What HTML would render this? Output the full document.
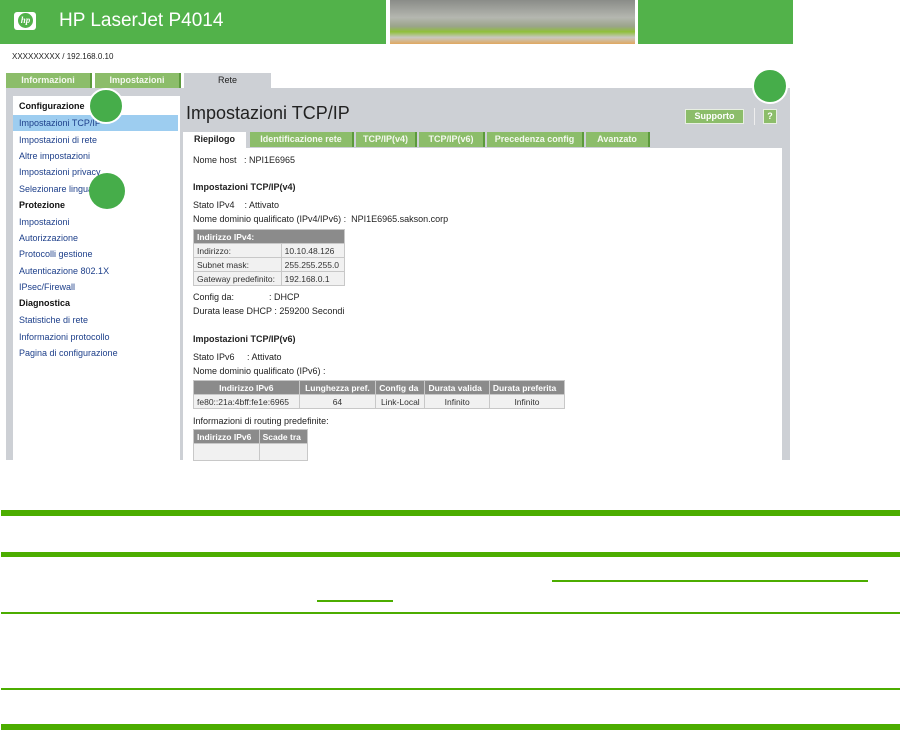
<!DOCTYPE html>
<html><head><meta charset="utf-8"><style>
*{margin:0;padding:0;box-sizing:border-box}
body{width:901px;height:732px;background:#fff;font-family:"Liberation Sans",Arial,sans-serif;position:relative;overflow:hidden;color:#222}
.a{position:absolute}
.t{font-size:9px;white-space:nowrap}
.nav{position:absolute;left:19px;font-size:9px;color:#1d3f8a;white-space:nowrap}
.nb{color:#111;font-weight:bold}
.tab{position:absolute;height:15px;background:#8cbd6a;color:#f4f8ef;font-weight:bold;font-size:9px;text-align:center;line-height:15px;border-right:2px solid #5c9a3c}
.circ{position:absolute;width:36px;height:36px;border-radius:50%;background:#46ad4a;border:2px solid #fff}
table{border-collapse:collapse;font-size:9px;position:absolute}
td,th{height:14px;padding:0 3px;white-space:nowrap;border:1px solid #c8c8c8}
th{background:#8b8b8b;color:#fff;text-align:left}
td{background:#f1f1f1;color:#333}
</style></head><body>
<div class="a" style="left:0;top:0;width:386px;height:44px;background:#52b24a"></div>
<div class="a" style="left:14px;top:12px;width:22px;height:18px;background:#fff;border-radius:3px"></div>
<div class="a" style="left:18px;top:13px;width:15px;height:15px;border-radius:50%;background:#52b24a;color:#fff;font:italic bold 9px 'Liberation Serif',serif;text-align:center;line-height:15px">hp</div>
<div class="a" style="left:59px;top:10px;color:#fff;font-size:19px">HP LaserJet P4014</div>
<div class="a" style="left:390px;top:0;width:245px;height:44px;background:linear-gradient(180deg,#8a8c88 0%,#b5b7b0 40%,#9aa48a 60%,#8fbf3a 72%,#c8c8c0 85%,#e0a860 100%)"></div>
<div class="a" style="left:638px;top:0;width:155px;height:44px;background:#52b24a"></div>
<div class="a t" style="left:12px;top:52px;font-size:8px;color:#222">XXXXXXXXX / 192.168.0.10</div>

<div class="a" style="left:6px;top:88px;width:784px;height:372px;background:#cdd0d5"></div>
<div class="tab" style="left:6px;top:73px;width:86px">Informazioni</div>
<div class="tab" style="left:95px;top:73px;width:86px">Impostazioni</div>
<div class="a" style="left:184px;top:73px;width:87px;height:15px;background:#cdd0d5;font-size:9px;text-align:center;line-height:15px;color:#222">Rete</div>

<div class="a" style="left:13px;top:96px;width:167px;height:364px;background:#fff"></div>
<div class="a" style="left:13px;top:115px;width:165px;height:16px;background:#9dcdf0"></div>
<div class="nav nb" style="top:101px">Configurazione</div>
<div class="nav" style="top:118px">Impostazioni TCP/IP</div>
<div class="nav" style="top:135px">Impostazioni di rete</div>
<div class="nav" style="top:151px">Altre impostazioni</div>
<div class="nav" style="top:167px">Impostazioni privacy</div>
<div class="nav" style="top:184px">Selezionare lingua</div>
<div class="nav nb" style="top:200px">Protezione</div>
<div class="nav" style="top:217px">Impostazioni</div>
<div class="nav" style="top:233px">Autorizzazione</div>
<div class="nav" style="top:249px">Protocolli gestione</div>
<div class="nav" style="top:266px">Autenticazione 802.1X</div>
<div class="nav" style="top:282px">IPsec/Firewall</div>
<div class="nav nb" style="top:298px">Diagnostica</div>
<div class="nav" style="top:315px">Statistiche di rete</div>
<div class="nav" style="top:332px">Informazioni protocollo</div>
<div class="nav" style="top:348px">Pagina di configurazione</div>

<div class="a" style="left:186px;top:103px;font-size:18px;color:#222">Impostazioni TCP/IP</div>
<div class="a" style="left:685px;top:109px;width:59px;height:15px;background:#8cbd6a;border:1px solid #e8efe2;color:#fff;font-weight:bold;font-size:9px;text-align:center;line-height:13px">Supporto</div>
<div class="a" style="left:754px;top:108px;width:1px;height:17px;background:#eee"></div>
<div class="a" style="left:763px;top:109px;width:14px;height:15px;background:#8cbd6a;border:1px solid #e8efe2;color:#fff;font-weight:bold;font-size:9px;text-align:center;line-height:13px">?</div>

<div class="a" style="left:183px;top:132px;width:63px;height:16px;background:#fff;font-size:9px;font-weight:bold;text-align:center;line-height:15px">Riepilogo</div>
<div class="tab" style="left:250px;top:132px;width:104px">Identificazione rete</div>
<div class="tab" style="left:356px;top:132px;width:61px">TCP/IP(v4)</div>
<div class="tab" style="left:419px;top:132px;width:66px">TCP/IP(v6)</div>
<div class="tab" style="left:487px;top:132px;width:97px">Precedenza config</div>
<div class="tab" style="left:586px;top:132px;width:64px">Avanzato</div>

<div class="a" style="left:183px;top:148px;width:599px;height:312px;background:#fff"></div>
<div class="a t" style="left:193px;top:155px">Nome host &nbsp;&nbsp;: NPI1E6965</div>
<div class="a t" style="left:193px;top:182px;font-weight:bold">Impostazioni TCP/IP(v4)</div>
<div class="a t" style="left:193px;top:200px">Stato IPv4 &nbsp;&nbsp;&nbsp;: Attivato</div>
<div class="a t" style="left:193px;top:214px">Nome dominio qualificato (IPv4/IPv6) : &nbsp;NPI1E6965.sakson.corp</div>
<table style="left:193px;top:229px;width:152px;font-size:8.5px">
<tr><th colspan="2">Indirizzo IPv4:</th></tr>
<tr><td>Indirizzo:</td><td>10.10.48.126</td></tr>
<tr><td>Subnet mask:</td><td>255.255.255.0</td></tr>
<tr><td>Gateway predefinito:</td><td>192.168.0.1</td></tr>
</table>
<div class="a t" style="left:193px;top:292px">Config da: &nbsp;&nbsp;&nbsp;&nbsp;&nbsp;&nbsp;&nbsp;&nbsp;&nbsp;&nbsp;&nbsp;&nbsp;&nbsp;: DHCP</div>
<div class="a t" style="left:193px;top:306px">Durata lease DHCP : 259200 Secondi</div>
<div class="a t" style="left:193px;top:334px;font-weight:bold">Impostazioni TCP/IP(v6)</div>
<div class="a t" style="left:193px;top:352px">Stato IPv6 &nbsp;&nbsp;&nbsp;&nbsp;: Attivato</div>
<div class="a t" style="left:193px;top:366px">Nome dominio qualificato (IPv6) :</div>
<table style="left:193px;top:380px;width:372px;font-size:8.5px">
<tr><th style="text-align:center">Indirizzo IPv6</th><th style="text-align:center">Lunghezza pref.</th><th>Config da</th><th>Durata valida</th><th>Durata preferita</th></tr>
<tr><td>fe80::21a:4bff:fe1e:6965</td><td style="text-align:center">64</td><td style="text-align:center">Link-Local</td><td style="text-align:center">Infinito</td><td style="text-align:center">Infinito</td></tr>
</table>
<div class="a t" style="left:193px;top:416px">Informazioni di routing predefinite:</div>
<table style="left:193px;top:429px;width:115px;font-size:8.5px">
<tr><th>Indirizzo IPv6</th><th>Scade tra</th></tr>
<tr><td style="height:17px"></td><td></td></tr>
</table>

<div class="circ" style="left:88px;top:88px"></div>
<div class="circ" style="left:89px;top:173px;border-color:transparent"></div>
<div class="circ" style="left:752px;top:68px"></div>

<div class="a" style="left:1px;top:510px;width:899px;height:6px;background:#4cad00"></div>
<div class="a" style="left:1px;top:552px;width:899px;height:5px;background:#4cad00"></div>
<div class="a" style="left:552px;top:580px;width:316px;height:2px;background:#4cad00"></div>
<div class="a" style="left:317px;top:600px;width:76px;height:2px;background:#4cad00"></div>
<div class="a" style="left:1px;top:612px;width:899px;height:2px;background:#4cad00"></div>
<div class="a" style="left:1px;top:688px;width:899px;height:2px;background:#4cad00"></div>
<div class="a" style="left:1px;top:724px;width:899px;height:6px;background:#4cad00"></div>
</body></html>
